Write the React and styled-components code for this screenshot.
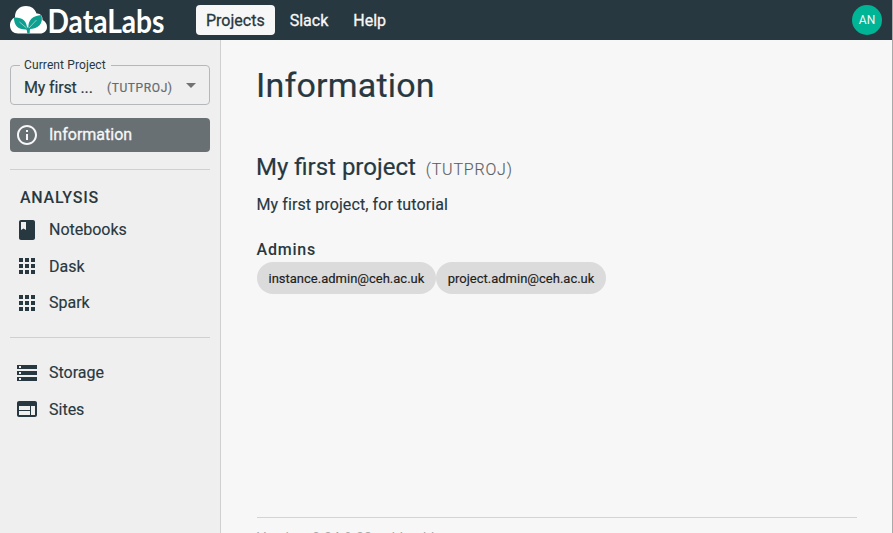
import React from "react";
import styled, { createGlobalStyle } from "styled-components";

const Global = createGlobalStyle`
  * { box-sizing: border-box; }
  body { margin: 0; background: #f7f7f7; overflow: hidden; }
  h1, h2, h3, p { margin: 0; }
  button { font: inherit; border: 0; background: none; padding: 0; text-align: left; }
`;

const Page = styled.div`
  display: flex;
  flex-direction: column;
  width: 893px;
  height: 533px;
  overflow: hidden;
  border-right: 1px solid #a9a9a9;
  background: #f7f7f7;
  color: #283840;
  font-family: Roboto, sans-serif;
  font-size: 16px;
  font-weight: 400;
`;

const TopBar = styled.header`
  display: flex;
  align-items: center;
  flex: 0 0 40px;
  width: 893px;
  padding: 0 11px 0 10px;
  background: #283840;
`;

const Logo = styled.svg`
  width: 160px;
  height: 40px;
  flex: none;
  overflow: visible;
`;

const LogoText = styled.text`
  font-family: Lato, sans-serif;
  font-size: 32.5px;
  font-weight: 700;
  fill: #fff;
`;

const TopNav = styled.nav`
  display: flex;
  margin-left: 26px;
  gap: 5px;
`;

const NavLink = styled.button`
  height: 30px;
  padding: 1px 10px 0;
  border-radius: 4px;
  line-height: 29px;
  -webkit-text-stroke: 0.3px currentColor;
  background: ${(p) => (p.$active ? "#f7f7f7" : "transparent")};
  color: ${(p) => (p.$active ? "#283840" : "#f7f7f7")};
`;

const Avatar = styled.div`
  width: 30px;
  height: 30px;
  margin-left: auto;
  border-radius: 50%;
  background: #00b496;
  color: #f7f7f7;
  font-size: 12px;
  line-height: 30px;
  text-align: center;
`;

const Body = styled.div`
  display: flex;
  flex: 1;
  min-height: 0;
`;

const Sidebar = styled.aside`
  flex: 0 0 221px;
  padding: 18px 10px 0;
  border-right: 1px solid #d0d0d0;
  background: #efefef;
`;

const ProjectSelect = styled.fieldset`
  display: flex;
  align-items: center;
  height: 47px;
  margin: 0;
  padding: 0 13px 1px 13px;
  border: 1px solid #b5b8ba;
  border-radius: 4px;
`;

const SelectLabel = styled.legend`
  height: 14px;
  margin-left: -4px;
  padding: 0 5px 0 4px;
  font-size: 12px;
  line-height: 14px;
  letter-spacing: 0.11px;
`;

const SelectName = styled.span`
  width: 83px;
  line-height: 24px;
  letter-spacing: -0.15px;
  -webkit-text-stroke: 0.2px currentColor;
`;

const SelectKey = styled.span`
  flex: 1;
  color: #666a6d;
  font-size: 12px;
  letter-spacing: 0.6px;
  white-space: nowrap;
  -webkit-text-stroke: 0.2px currentColor;
`;

const Caret = styled.svg`
  width: 10px;
  height: 5px;
  margin-bottom: 4px;
  fill: #707376;
`;

const SideItem = styled.button`
  display: flex;
  align-items: center;
  width: 100%;
  height: ${(p) => (p.$active ? "34px" : "36.5px")};
  margin-top: ${(p) => (p.$active ? "13px" : "0")};
  padding-left: 5px;
  gap: 10px;
  border-radius: 4px;
  background: ${(p) => (p.$active ? "#687074" : "transparent")};
  color: ${(p) => (p.$active ? "#f7f7f7" : "#283840")};
  -webkit-text-stroke: ${(p) => (p.$active ? "0.3px" : "0.15px")} currentColor;
`;

const ItemLabel = styled.span`
  padding-bottom: ${(p) => (p.$active ? "2px" : "0")};
`;

const ItemIcon = styled.svg`
  width: 24px;
  height: 24px;
  fill: currentColor;
  stroke: none;
`;

const SideRule = styled.hr`
  height: 1px;
  margin: ${(p) => p.$margin};
  border: 0;
  background: #d0d0d0;
`;

const SectionTitle = styled.h3`
  padding-left: 10px;
  margin-bottom: 1.5px;
  font-size: 16px;
  font-weight: 500;
  line-height: 24px;
  letter-spacing: 0.75px;
`;

const Main = styled.main`
  flex: 1;
  padding: 24px 35px 0 36px;
`;

const PageTitle = styled.h1`
  margin-left: -1px;
  font-size: 34px;
  font-weight: 400;
  line-height: 42px;
  letter-spacing: 0.2px;
  -webkit-text-stroke: 0.2px currentColor;
`;

const ProjectHeading = styled.div`
  display: flex;
  align-items: baseline;
  margin: 45px 0 0 -1px;
  gap: 10px;
  height: 32px;
`;

const ProjectName = styled.h2`
  font-size: 24px;
  font-weight: 400;
  line-height: 32px;
  -webkit-text-stroke: 0.2px currentColor;
`;

const ProjectKey = styled.span`
  color: #5c6063;
  font-size: 16px;
  font-weight: 300;
  letter-spacing: 0.8px;
  -webkit-text-stroke: 0.15px currentColor;
`;

const Description = styled.p`
  margin: 10px 0 0 -0.5px;
  line-height: 24px;
  letter-spacing: 0.1px;
  -webkit-text-stroke: 0.15px currentColor;
`;

const AdminsTitle = styled.h3`
  margin: 21px 0 0 -0.5px;
  font-size: 16px;
  font-weight: 500;
  line-height: 24px;
  letter-spacing: 0.8px;
`;

const ChipRow = styled.div`
  display: flex;
`;

const Chip = styled.span`
  height: 32px;
  padding: 0 11.9px 0 11.5px;
  border-radius: 16px;
  background: #dbdbdb;
  color: #202020;
  font-size: 13px;
  line-height: 33px;
  -webkit-text-stroke: 0.15px currentColor;
`;

const Footer = styled.footer`
  margin-top: 223px;
  padding-top: 10px;
  border-top: 1px solid #d4d4d4;
  color: #a5a9ab;
  font-size: 14px;
  line-height: 20px;
  letter-spacing: 0.14px;
`;

const ICONS = {
  info: "M11 7h2v2h-2zm0 4h2v6h-2zm1-9C6.48 2 2 6.48 2 12s4.48 10 10 10 10-4.48 10-10S17.52 2 12 2zm0 18c-4.41 0-8-3.59-8-8s3.59-8 8-8 8 3.59 8 8-3.59 8-8 8z",
  book: "M18 2H6c-1.1 0-2 .9-2 2v16c0 1.1.9 2 2 2h12c1.1 0 2-.9 2-2V4c0-1.1-.9-2-2-2zM6 4h5v8l-2.500-1.500L6 12V4z",
  grid: "M4 8h4V4H4v4zm6 12h4v-4h-4v4zm-6 0h4v-4H4v4zm0-6h4v-4H4v4zm6 0h4v-4h-4v4zm6-10v4h4V4h-4zm-6 4h4V4h-4v4zm6 6h4v-4h-4v4zm0 6h4v-4h-4v4z",
  storage: "M2 20h20v-4H2v4zm2-3h2v2H4v-2zM2 4v4h20V4H2zm4 3H4V5h2v2zm-4 7h20v-4H2v4zm2-3h2v2H4v-2z",
  web: "M20 4H4c-1.100 0-1.990.9-1.990 2L2 18c0 1.100.9 2 2 2h16c1.100 0 2-.9 2-2V6c0-1.100-.9-2-2-2zm-5 14H4v-4h11v4zm0-5H4V9h11v4zm5 5h-4V9h4v9z",
};

function Item({ icon, label, active }) {
  return (
    <SideItem $active={active}>
      <ItemIcon viewBox="0 0 24 24"><path d={ICONS[icon]} /></ItemIcon>
      <ItemLabel $active={active}>{label}</ItemLabel>
    </SideItem>
  );
}

function DataLabsLogo() {
  return (
    <Logo viewBox="0 0 160 40">
      <path fill="#fff" d="M8 33.500C3.500 33.500 0 30.500 0 25.500C0 21.500 2 18.500 5 17.500C4.500 10.500 9.500 6 16 6C21.500 6 25 9 26.500 13.500C30.500 13 33 16.500 32.500 20C35.500 21.500 37 24 37 27C37 31 34 33.500 30 33.500Z" />
      <path fill="#0d9f8f" d="M4 17.500C11.500 17 17.500 20.500 17 29.500C9 30 4 26.500 4 17.500ZM31.300 15C34 24 27.500 29.500 18.500 29C17.500 20 23 15.500 31.300 15Z" />
      <path fill="none" stroke="#0d9f8f" strokeWidth="2.200" d="M16 27C18 29 18.500 31 18.500 33.500M18.500 33.500C18.500 30 19 28 20.500 26" />
      <path fill="none" stroke="#fff" strokeWidth="0.5" d="M9.500 22L16.500 28M26.500 20L19 28" />
      <LogoText x="37.500" y="33" textLength="117" lengthAdjust="spacingAndGlyphs">DataLabs</LogoText>
    </Logo>
  );
}

export default function App() {
  return (
    <>
      <Global />
      <Page>
        <TopBar>
          <DataLabsLogo />
          <TopNav>
            <NavLink $active>Projects</NavLink>
            <NavLink>Slack</NavLink>
            <NavLink>Help</NavLink>
          </TopNav>
          <Avatar>AN</Avatar>
        </TopBar>
        <Body>
          <Sidebar>
            <ProjectSelect>
              <SelectLabel>Current Project</SelectLabel>
              <SelectName>My first ...</SelectName>
              <SelectKey>(TUTPROJ)</SelectKey>
              <Caret viewBox="0 0 10 5"><path d="M0 0L5 5L10 0Z" /></Caret>
            </ProjectSelect>
            <Item icon="info" label="Information" active />
            <SideRule $margin="17px 0 16px" />
            <SectionTitle>ANALYSIS</SectionTitle>
            <Item icon="book" label="Notebooks" />
            <Item icon="grid" label="Dask" />
            <Item icon="grid" label="Spark" />
            <SideRule $margin="15.5px 0 17px" />
            <Item icon="storage" label="Storage" />
            <Item icon="web" label="Sites" />
          </Sidebar>
          <Main>
            <PageTitle>Information</PageTitle>
            <ProjectHeading>
              <ProjectName>My first project</ProjectName>
              <ProjectKey>(TUTPROJ)</ProjectKey>
            </ProjectHeading>
            <Description>My first project, for tutorial</Description>
            <AdminsTitle>Admins</AdminsTitle>
            <ChipRow>
              <Chip>instance.admin@ceh.ac.uk</Chip>
              <Chip>project.admin@ceh.ac.uk</Chip>
            </ChipRow>
            <Footer>Version: 0.34.8-32-gabbaebb</Footer>
          </Main>
        </Body>
      </Page>
    </>
  );
}
